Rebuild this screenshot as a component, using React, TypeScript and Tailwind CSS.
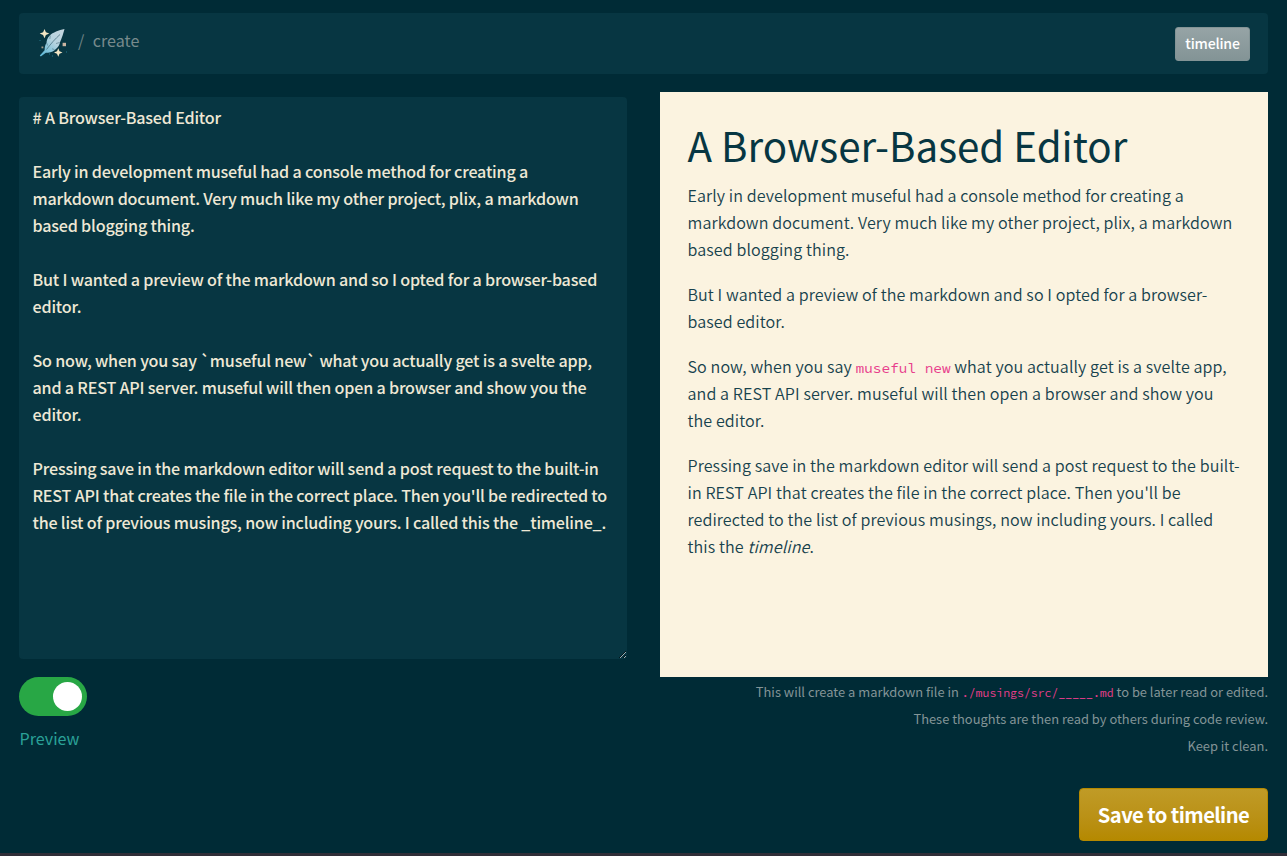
import { useState } from 'react';

const markdown = `# A Browser-Based Editor

Early in development museful had a console method for creating a markdown document. Very much like my other project, plix, a markdown based blogging thing.

But I wanted a preview of the markdown and so I opted for a browser-based editor.

So now, when you say \`museful new\` what you actually get is a svelte app, and a REST API server. museful will then open a browser and show you the editor.

Pressing save in the markdown editor will send a post request to the built-in REST API that creates the file in the correct place. Then you'll be redirected to the list of previous musings, now including yours. I called this the _timeline_.`;

function FeatherLogo() {
  return (
    <svg width="28" height="30" viewBox="0 0 28 30" className="shrink-0">
      <defs>
        <linearGradient id="feather" x1="1" y1="0" x2="0.2" y2="1">
          <stop offset="0" stopColor="#c6d6df" />
          <stop offset="0.5" stopColor="#b5d3df" />
          <stop offset="1" stopColor="#62b9d6" />
        </linearGradient>
      </defs>
      <path
        d="M25.5 1C20 2.2 13.5 4.6 11 7.2C8.200 10 7.600 12.600 7.500 15C5.800 17.500 5.700 20 5.600 22.200L0.800 27.500L1.800 28.500L6.800 24.800C9.600 24.600 13.300 24.200 15.600 22.200C19.400 19.200 20.700 16.600 21 14.200C22.500 11 23.800 7.500 25.500 1Z"
        fill="url(#feather)"
      />
      <path d="M21 6.500C16.500 10.500 12 15.500 7.500 21.500" fill="none" stroke="#4d7383" strokeWidth="0.8" />
      <path d="M11.300 7.500L10.800 11M7.800 15.200L8.600 17.500M20.700 14.500L17 15.500M15.500 21.600L13 20.800" fill="none" stroke="#4d7383" strokeWidth="0.6" />
      <path d="M5.500 1L6.900 4.200L10.300 5.600L6.900 7L5.500 10.200L4.100 7L0.700 5.600L4.100 4.200Z" fill="#f3e6c4" />
      <path d="M19.300 20.300L20.500 23.200L23.500 24.500L20.500 25.800L19.300 28.700L18 25.800L15 24.500L18 23.200Z" fill="#f3e6c4" />
      <rect x="23.600" y="14.800" width="3.400" height="3.400" fill="#cbb5a2" />
      <rect x="2.500" y="18.500" width="1.800" height="1.800" fill="#a79c8b" />
      <path d="M0.500 12.500h1M27 24h1M10 26h1M13 28h1" stroke="#24758a" strokeWidth="1" />
    </svg>
  );
}

export default function App() {
  const [text, setText] = useState(markdown);
  const [preview, setPreview] = useState(true);
  return (
    <div className="flex h-[856px] w-full flex-col overflow-hidden border-b-3 border-[#302e38] bg-[#002b36] font-['Noto_Sans_CJK_SC','Noto_Sans',sans-serif] text-[16.1px] leading-[27px] text-[#839496]">
      <header className="mx-[19px] mt-[13px] flex h-[61px] shrink-0 items-center justify-between rounded bg-[#073642] pr-[18px] pl-[20px]">
        <div className="mb-[2px] flex items-center">
          <FeatherLogo />
          <span className="-mt-[4px] ml-[11px] text-[#6d8285]">/</span>
          <span className="-mt-[4px] ml-[8.5px] text-[#778a8c]">create</span>
        </div>
        <button className="h-[34px] w-[75px] rounded-[3px] border border-[#839496] bg-linear-to-b from-[#96a4a6] to-[#839496] pb-[2px] text-[14.1px] leading-[30px] font-medium tracking-[-0.2px] text-white">
          timeline
        </button>
      </header>

      <main className="mx-[19px] mt-[18px] flex shrink-0 justify-between">
        <section className="flex w-[608px] flex-col">
          <textarea
            value={text}
            onChange={(e) => setText(e.target.value)}
            spellCheck={false}
            className="mt-[5px] block h-[562px] w-full resize overflow-hidden rounded bg-[#073642] py-[7px] pr-[17px] pl-[13.5px] font-medium tracking-[-0.185px] text-[#eee8d5] outline-none"
          />
          <button
            role="switch"
            aria-checked={preview}
            onClick={() => setPreview(!preview)}
            className="mt-[18px] flex h-[39px] w-[68px] items-center justify-end rounded-full bg-[#28a745] pr-[5px]"
          >
            <span className="size-[29px] rounded-full bg-white" />
          </button>
          <label className="mt-[9px] ml-[0.5px] text-[#2aa198]">Preview</label>
        </section>

        <section className="flex w-[608px] flex-col">
          <article className="h-[585px] bg-[#fbf3e0] pr-[25px] pl-[27.5px] pt-[26px] font-[350] tracking-[0.09px] text-[#17424d]">
            <h1 className="mb-[10px] text-[40.3px] leading-[54px] font-normal tracking-normal text-[#073642]">A Browser-Based Editor</h1>
            <p className="mb-[18px]">Early in development museful had a console method for creating a markdown document. Very much like my other project, plix, a markdown based blogging thing.</p>
            <p className="mb-[18px]">But I wanted a preview of the markdown and so I opted for a browser-based editor.</p>
            <p className="mb-[18px] pr-2">
              So now, when you say <code className="font-['Source_Code_Pro','Liberation_Mono',monospace] text-[14.4px] leading-none font-normal tracking-normal text-[#e83e8c]">museful new</code> what you actually get is a svelte app, and a REST API server. museful will then open a browser and show you the editor.
            </p>
            <p>
              Pressing save in the markdown editor will send a post request to the built-in REST API that creates the file in the correct place. Then you'll be redirected to the list of previous musings, now including yours. I called this the <em>timeline</em>.
            </p>
          </article>
          <div className="mt-px text-right text-[12.9px]">
            <p>This will create a markdown file in <code className="font-['Source_Code_Pro','Liberation_Mono',monospace] text-[11.5px] leading-none text-[#e83e8c]">./musings/src/_____.md</code> to be later read or edited.</p>
            <p>These thoughts are then read by others during code review.</p>
            <p>Keep it clean.</p>
          </div>
          <button className="mt-[29px] h-[53px] w-[189px] self-end rounded border border-[#b58900] bg-linear-to-b from-[#c09b26] to-[#b58900] text-[20.2px] font-bold tracking-[-0.58px] text-white">
            Save to timeline
          </button>
        </section>
      </main>
    </div>
  );
}
